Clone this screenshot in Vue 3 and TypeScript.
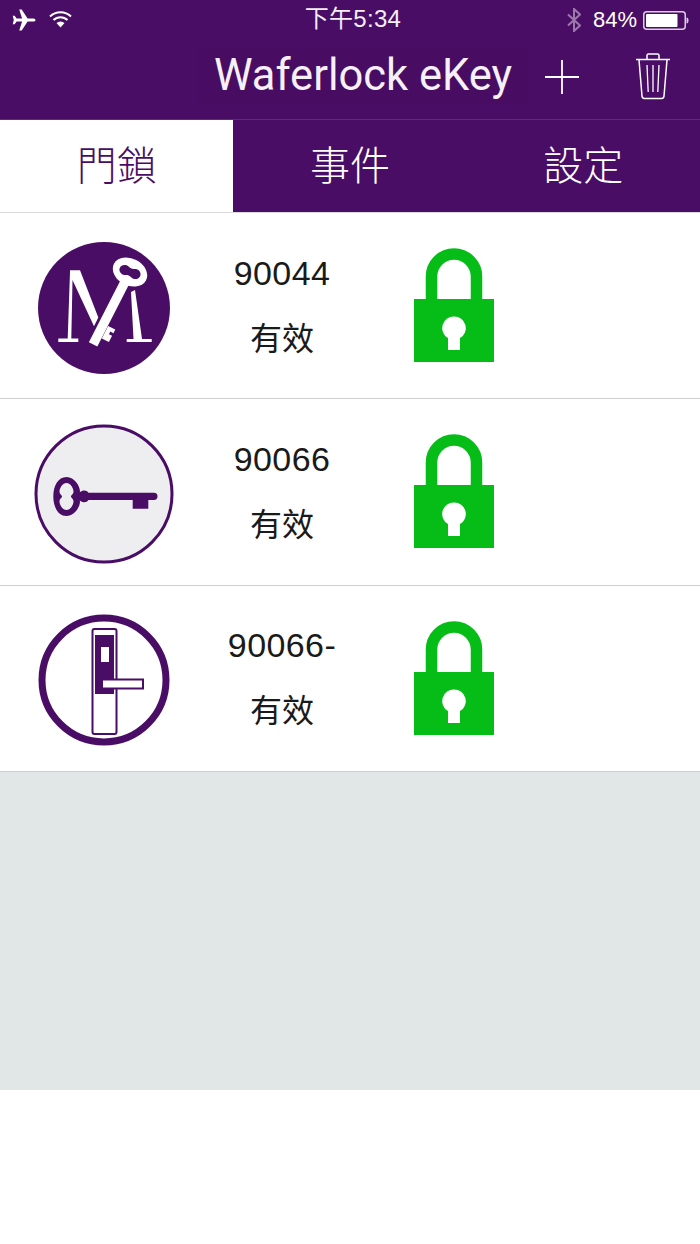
<script setup lang="ts">
type LockRow = { id: string; status: string; icon: 'brand' | 'key' | 'door' }

const tabs = ['門鎖', '事件', '設定']
const rows: LockRow[] = [
  { id: '90044', status: '有效', icon: 'brand' },
  { id: '90066', status: '有效', icon: 'key' },
  { id: '90066-', status: '有效', icon: 'door' }
]
</script>

<template>
  <div class="screen">
    <header class="top">
      <div class="status-bar">
        <div class="status-left">
          <svg class="plane" width="24" height="22" viewBox="0 0 24 22">
            <path d="M23.500 11c0-1-1.200-1.600-2.600-1.600h-5.300L9.700.6H7.200l2.900 8.800H4.600L2.700 6.800H.7l1.100 4.200L.7 15.200h2l1.900-2.600h5.500L7.200 21.400h2.500l5.900-8.800h5.300c1.400 0 2.600-.6 2.600-1.600z" fill="#fff" />
          </svg>
          <svg class="wifi" width="23" height="17" viewBox="0 0 23 17">
            <path d="M1 5.500a15 15 0 0 1 21 0M4.500 9a10 10 0 0 1 14 0" fill="none" stroke="#fff" stroke-width="2" />
            <path d="M7.500 12a6 6 0 0 1 8 0L11.500 16.500z" fill="#fff" />
          </svg>
        </div>
        <div class="status-time">下午5:34</div>
        <div class="status-right">
          <svg class="bt" width="14" height="24" viewBox="0 0 14 24">
            <path d="M1 6.500l12 11L7 23V1l6 5.500L1 17.500" fill="none" stroke="#fff" stroke-opacity=".45" stroke-width="2" />
          </svg>
          <span class="pct">84%</span>
          <svg class="battery" width="46" height="19" viewBox="0 0 46 19">
            <rect x=".75" y=".75" width="41.500" height="17.500" rx="3" fill="none" stroke="#fff" stroke-opacity=".8" stroke-width="1.500" />
            <rect x="3" y="3" width="31.500" height="13" rx="1" fill="#fff" />
            <path d="M43.500 6.500c1.300 0 2 1.300 2 3s-.7 3-2 3z" fill="#fff" fill-opacity=".8" />
          </svg>
        </div>
      </div>
      <nav class="nav">
        <div class="nav-title">Waferlock eKey</div>
        <svg class="plus" width="34" height="34" viewBox="0 0 34 34">
          <path d="M0 17h34M17 0v34" stroke="#fff" stroke-width="1.800" />
        </svg>
        <svg class="trash" width="36" height="48" viewBox="0 0 36 48">
          <path d="M1 7.500h34M12 7V3.500Q12 2 13.500 2h9Q24 2 24 3.500V7" fill="none" stroke="#fff" stroke-width="1.500" />
          <path d="M4 8l3 36q.2 2.500 2.500 2.500h17q2.300 0 2.500-2.500l3-36" fill="none" stroke="#fff" stroke-width="1.500" />
          <path d="M12 13l1.200 27M18 13v27M24 13l-1.200 27" fill="none" stroke="#fff" stroke-width="1.300" />
        </svg>
      </nav>
    </header>

    <div class="tabs">
      <div v-for="(tab, i) in tabs" :key="tab" :class="['tab', { active: i === 0 }]"><span>{{ tab }}</span></div>
    </div>

    <ul class="lock-list">
      <li v-for="row in rows" :key="row.id" class="lock-row">
        <div class="icon-cell">
          <svg v-if="row.icon === 'brand'" width="140" height="140" viewBox="0 0 140 140">
            <circle cx="70" cy="70" r="66" fill="#4a0d66" />
            <path d="M36 32.300H46L64.300 79.600 60 88.300 38.500 42 37.300 100.500H44.300V104H24.300V100.500H33.700L36 34z" fill="#fff" />
            <path d="M97 54l4-2 7 49h9.700v3h-25v-3h6.800z" fill="#fff" />
            <g transform="rotate(27 96 34)">
              <path d="M90.500 44h11v72h-11z" fill="#fff" stroke="#4a0d66" stroke-width="1.500" />
              <path d="M101 92h8v4h-3.500v3h3.500v7h-8z" fill="#fff" />
              <ellipse cx="96" cy="34" rx="18" ry="13.500" fill="#fff" />
              <path d="M85 34c0-3 2.700-5 5.500-5 2.300 0 3.500 1.300 5.500 1.300s3.200-1.300 5.500-1.300c2.800 0 5.500 2 5.500 5s-2.700 5-5.500 5c-2.300 0-3.500-1.300-5.500-1.300s-3.200 1.300-5.500 1.300c-2.800 0-5.500-2-5.500-5z" transform="rotate(-6 96 34)" fill="#4a0d66" />
            </g>
          </svg>
          <svg v-else-if="row.icon === 'key'" width="140" height="140" viewBox="0 0 140 140">
            <circle cx="70" cy="70" r="68" fill="#eeeef0" stroke="#4a0d66" stroke-width="3" />
            <path fill-rule="evenodd" fill="#4a0d66" d="M32.500 53c8 0 13.500 9 13.500 14.500 0 1.300-1 2.500-1 5s1 3.700 1 5C46 83 40.500 92 32.500 92 24 92 19.300 83 19.300 72.500S24 53 32.500 53zm0 6c-4.500 0-7 6-7 8.500 0 3 2.500 3.500 2.500 5s-2.500 2-2.500 5c0 2.500 2.500 8.500 7 8.500s7-6 7-8.500c0-3-2.500-3.500-2.500-5s2.500-2 2.500-5c0-2.500-2.500-8.500-7-8.500z" />
            <path fill="#4a0d66" d="M44 69l5-2.500q4-.5 5.500 2.200H120q3.500 0 3.500 3.650T120 76h-5.700v8.700H98.700V76H54.500q-1.500 2.700-5.500 2.200l-5-2.500z" />
          </svg>
          <svg v-else width="140" height="140" viewBox="0 0 140 140">
            <circle cx="70" cy="70" r="62" fill="#fff" stroke="#4a0d66" stroke-width="7" />
            <rect x="58.500" y="19" width="24" height="105" rx="2" fill="#fff" stroke="#4a0d66" stroke-width="2" />
            <rect x="61" y="25" width="19" height="59" fill="#4a0d66" />
            <rect x="67" y="37" width="8" height="15" fill="#fff" />
            <rect x="68" y="69.500" width="41" height="9" fill="#fff" stroke="#4a0d66" stroke-width="2" />
          </svg>
        </div>
        <div class="text-cell">
          <div class="lock-id">{{ row.id }}</div>
          <div class="lock-status">{{ row.status }}</div>
        </div>
        <svg class="padlock" width="80" height="114" viewBox="0 0 80 114">
          <path d="M17.500 52V28.500a22.500 22.500 0 0 1 45 0V52" fill="none" stroke="#06bd18" stroke-width="11.500" />
          <path fill-rule="evenodd" fill="#06bd18" d="M0 51h80v63H0zM40 68.500a11.500 11.500 0 0 0-6 21.500V102h12V90A11.500 11.500 0 0 0 40 68.500z" />
        </svg>
      </li>
    </ul>

    <div class="empty-area"></div>
  </div>
</template>

<style>
html, body { margin: 0; background: #fff; }
</style>

<style scoped>
.screen { width: 700px; height: 1244px; background: #fff; font-family: "Liberation Sans", "Noto Sans CJK TC", sans-serif; overflow: hidden; }
.top { background: #4a0d66; color: #fff; }

.status-bar { height: 40px; display: grid; grid-template-columns: 1fr auto 1fr; align-items: center; font-size: 22px; }
.status-left { display: flex; align-items: center; gap: 13px; padding-left: 12px; }
.wifi { margin-top: -2px; }
.status-time { font-size: 24px; line-height: 30px; margin: -2px 0 0 6px; letter-spacing: 0.3px; color: #f4eff7; }
.status-right { display: flex; align-items: center; justify-content: flex-end; padding-right: 11px; gap: 6px; }
.pct { margin-left: 6px; }

.nav { height: 80px; display: flex; align-items: center; box-sizing: border-box; border-bottom: 1px solid #5e2a7c; padding-left: 198px; }
.nav-title { width: 330px; height: 56px; line-height: 56px; text-align: center; font-family: Roboto, "Liberation Sans", sans-serif; font-size: 43.5px; background: #480c63; color: #f6f0f8; margin-top: -8px; }
.plus { margin-left: 17px; margin-top: -6px; }
.trash { margin-left: 56px; margin-top: -7px; }

.tabs { display: grid; grid-template-columns: repeat(3, 1fr); height: 93px; background: #4a0d66; border-bottom: 1px solid #d9d9de; box-sizing: border-box; }
.tab { display: flex; align-items: center; justify-content: center; font-size: 40px; font-weight: 300; color: #fff; padding-bottom: 6px; }
.tab.active { background: #fff; color: #4a0d66; }

.lock-list { list-style: none; margin: 0; padding: 0; }
.lock-row { height: 186.33px; box-sizing: border-box; border-bottom: 1px solid #cfcfd2; display: flex; align-items: center; background: #fff; }
.icon-cell { width: 208px; display: flex; justify-content: center; align-items: center; margin-top: 4px; }
.text-cell { width: 148px; text-align: center; color: #1a1a1a; }
.lock-id { font-size: 34px; line-height: 67px; letter-spacing: 0.4px; }
.lock-status { font-size: 32px; line-height: 65px; }
.padlock { margin-left: 58px; margin-top: -1px; }

.empty-area { height: 318px; background: #e1e6e6; }
</style>
